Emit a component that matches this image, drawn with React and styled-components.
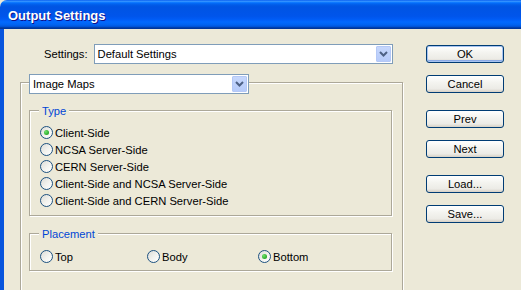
import React from 'react'
import styled, { createGlobalStyle } from 'styled-components'

const GlobalStyle = createGlobalStyle`
    html, body {
        margin: 0;
        padding: 0;
        background: #ece9d8;
        overflow: hidden;
    }

    body {
        font-family: "Liberation Sans", Arial, sans-serif;
        font-size: 11.2px;
        color: #000;
    }
`

const StyledWindow = styled.div`
    width: 521px;
    height: 290px;
    display: flex;
    flex-direction: column;
    overflow: hidden;
`

const TitleBar = styled.div`
    height: 29px;
    flex-shrink: 0;
    display: flex;
    align-items: center;
    padding: 1px 0 0 8px;
    box-sizing: border-box;
    border-top-left-radius: 7px;
    background: linear-gradient(
        to bottom,
        #0058ee 0%,
        #3a93ff 4%,
        #288eff 6%,
        #127dff 8%,
        #036ffc 10%,
        #0262ee 14%,
        #0057e5 20%,
        #0054e3 24%,
        #0055eb 56%,
        #005bf5 66%,
        #026afe 76%,
        #0062ef 86%,
        #0052d6 92%,
        #0040ab 95%,
        #003092 100%
    );
    color: #fff;
    font-family: "Liberation Sans", Arial, sans-serif;
    font-weight: bold;
    font-size: 13px;
    text-shadow: 1px 1px 0 #0f1089;
`

const Body = styled.div`
    flex: 1;
    display: flex;
    border-left: 4px solid #0855dd;
    background: #ece9d8;
`

const LeftColumn = styled.div`
    padding-left: 16px;
    display: flex;
    flex-direction: column;
`

const SettingsRow = styled.div`
    display: flex;
    align-items: center;
    margin-top: 15px;
    padding-left: 24px;
    gap: 6px;
`

const Select = styled.div`
    width: ${ p => p.$width }px;
    height: 20px;
    box-sizing: border-box;
    border: 1px solid #7f9db9;
    background: #fff;
    display: flex;
    align-items: center;
    justify-content: space-between;
    padding: 1px 1px 1px 3px;
`

const ArrowButton = styled.span`
    width: 15px;
    height: 16px;
    box-sizing: border-box;
    border: 1px solid #b4c8f6;
    border-radius: 1px;
    background: linear-gradient( to bottom, #c6d7fc, #b6cbfa );
    display: flex;
    align-items: center;
    justify-content: center;
`

const GroupBox = styled.div`
    box-sizing: border-box;
    width: ${ p => p.$width }px;
    height: ${ p => p.$height }px;
    margin-top: ${ p => p.$top }px;
    margin-left: ${ p => p.$left || 0 }px;
    border: 1px solid #aca899;
    box-shadow: 1px 1px 0 #fff, inset 1px 1px 0 #fff;
    display: flex;
    flex-direction: column;
    align-items: flex-start;
    flex-shrink: 0;
`

const HeaderSelect = styled.div`
    margin: -9px 0 0 8px;
`

const Legend = styled.span`
    display: inline-block;
    margin: -7px 0 0 9px;
    padding: 0 3px 0 3px;
    line-height: 14px;
    background: #ece9d8;
    color: #0046d5;
`

const RadioList = styled.div`
    margin: ${ p => p.$top }px 0 0 10px;
    display: flex;
    flex-direction: column;
`

const RadioGrid = styled.div`
    margin: 7px 0 0 10px;
    display: grid;
    grid-template-columns: 107px 111px auto;
`

const RadioRow = styled.label`
    height: 17px;
    display: flex;
    align-items: center;
    gap: 2px;
    white-space: nowrap;
`

const RadioCircle = styled.span`
    width: 13px;
    height: 13px;
    box-sizing: border-box;
    border-radius: 50%;
    border: 1px solid #1c5180;
    background: linear-gradient( 135deg, #dcdcd7 0%, #f3f3ef 55%, #fff 100% );
    display: flex;
    align-items: center;
    justify-content: center;
    flex-shrink: 0;

    &::after {
        content: '';
        display: ${ p => p.$checked ? 'block' : 'none' };
        width: 5px;
        height: 5px;
        border-radius: 50%;
        background: radial-gradient( circle at 35% 35%, #6ee36a, #21a121 80% );
    }
`

const RightColumn = styled.div`
    margin-left: 23px;
    padding-top: 16px;
    display: flex;
    flex-direction: column;
`

const Button = styled.div`
    width: 78px;
    height: 18px;
    box-sizing: border-box;
    margin-top: ${ p => p.$gap || 0 }px;
    border: 1px solid #003c74;
    border-radius: 3px;
    background: linear-gradient( to bottom, #fff 0%, #f4f4f0 40%, #ecebe6 80%, #d6d0c5 100% );
    box-shadow: ${ p => p.$default ? 'inset 0 0 0 1px #a8c4f0, inset 0 -1px 0 1px #8cabe6' : 'none' };
    display: flex;
    align-items: center;
    justify-content: center;
`

function DropdownSelect({ width, children }) {

    return (
        <Select $width={ width }>
            <span>{ children }</span>
            <ArrowButton>
                <svg width="9" height="6" viewBox="0 0 9 6">
                    <polyline points="1,1 4.5,4.5 8,1" fill="none" stroke="#4d6185" strokeWidth="2" />
                </svg>
            </ArrowButton>
        </Select>
    )
}

function Radio({ checked, children }) {

    return (
        <RadioRow>
            <RadioCircle $checked={ checked } />
            <span>{ children }</span>
        </RadioRow>
    )
}

const typeOptions = [
    'Client-Side',
    'NCSA Server-Side',
    'CERN Server-Side',
    'Client-Side and NCSA Server-Side',
    'Client-Side and CERN Server-Side',
]

export default function App() {

    return (
        <StyledWindow>
            <GlobalStyle />

            <TitleBar>Output Settings</TitleBar>

            <Body>
                <LeftColumn>

                    <SettingsRow>
                        <span>Settings:</span>
                        <DropdownSelect width={ 299 }>Default Settings</DropdownSelect>
                    </SettingsRow>

                    <GroupBox $width={ 383 } $height={ 240 } $top={ 18 }>

                        <HeaderSelect>
                            <DropdownSelect width={ 220 }>Image Maps</DropdownSelect>
                        </HeaderSelect>

                        <GroupBox $width={ 363 } $height={ 106 } $top={ 16 } $left={ 8 }>
                            <Legend>Type</Legend>
                            <RadioList $top={ 6 }>
                                { typeOptions.map( ( option, i ) => (
                                    <Radio key={ option } checked={ i === 0 }>{ option }</Radio>
                                ) ) }
                            </RadioList>
                        </GroupBox>

                        <GroupBox $width={ 363 } $height={ 38 } $top={ 17 } $left={ 8 }>
                            <Legend>Placement</Legend>
                            <RadioGrid>
                                <Radio>Top</Radio>
                                <Radio>Body</Radio>
                                <Radio checked>Bottom</Radio>
                            </RadioGrid>
                        </GroupBox>

                    </GroupBox>
                </LeftColumn>

                <RightColumn>
                    <Button $default>OK</Button>
                    <Button $gap={ 12 }>Cancel</Button>
                    <Button $gap={ 17 }>Prev</Button>
                    <Button $gap={ 12 }>Next</Button>
                    <Button $gap={ 17 }>Load...</Button>
                    <Button $gap={ 12 }>Save...</Button>
                </RightColumn>
            </Body>
        </StyledWindow>
    )
}
